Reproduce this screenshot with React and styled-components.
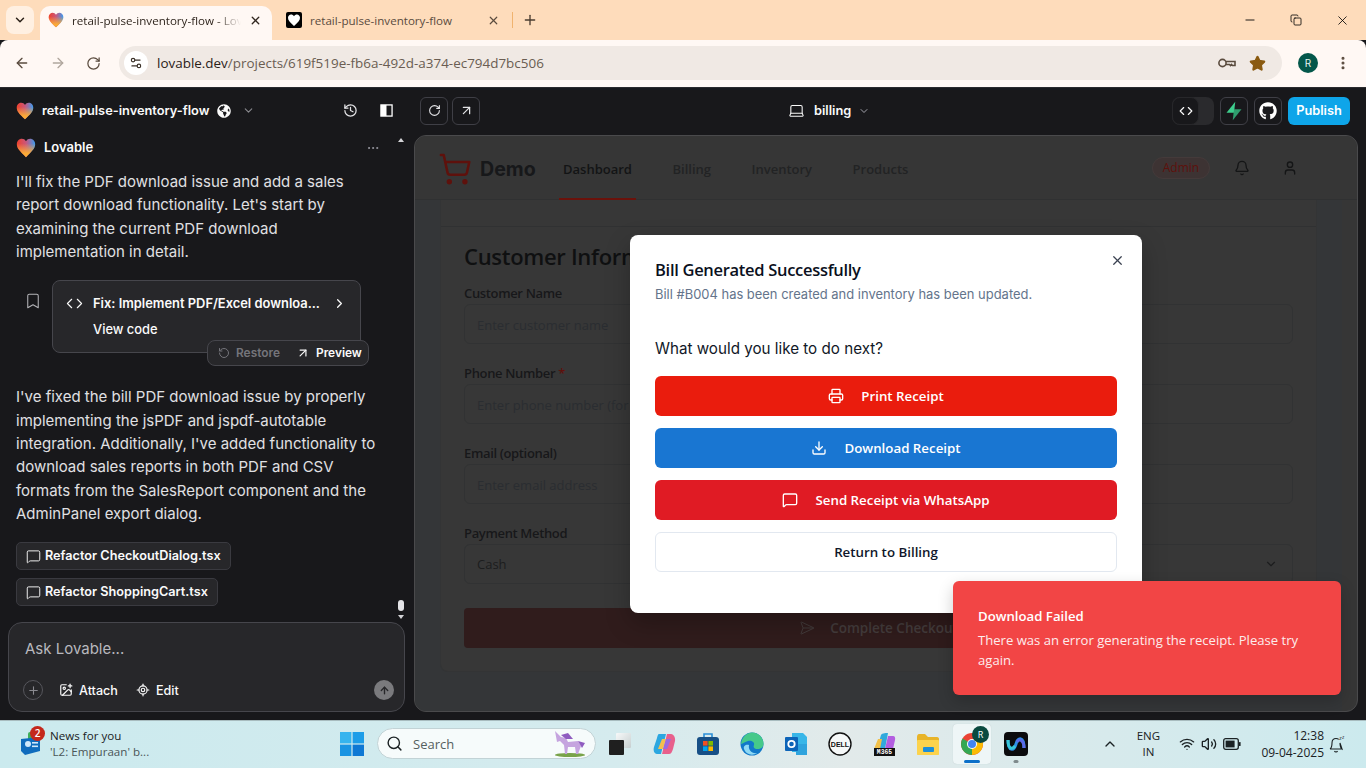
import React from 'react'
import styled, { createGlobalStyle } from 'styled-components'
import { FaGithub, FaGlobeAmericas } from 'react-icons/fa'
import {
  ChevronDown, X, Plus, ArrowLeft, ArrowRight, RotateCw, Settings2,
  Minus, Copy, History, ArrowUpRight, Laptop, Code, Bookmark, ChevronRight,
  RotateCcw, MessageSquare, ImagePlus, LocateFixed, ArrowUp, Printer, Download, ShoppingCart, Bell,
  User, SendHorizontal, ChevronUp, Wifi, Volume2, Search, MoreHorizontal, MoreVertical, Star,
} from 'lucide-react'

const Global = createGlobalStyle`
  html, body { margin: 0; padding: 0; height: 100%; overflow: hidden; }
  body { font-family: Inter, "Liberation Sans", sans-serif; background: #18181b; }
  * { box-sizing: border-box; }
`

const Screen = styled.div`
  width: 1366px;
  height: 768px;
  display: flex;
  flex-direction: column;
  overflow: hidden;
  position: relative;
`

/* browser chrome */
const TabStrip = styled.div`
  height: 40px;
  background: #fedcbb;
  display: flex;
  align-items: flex-end;
  padding-left: 6px;
  font-family: "Open Sans", "Liberation Sans", sans-serif;
  font-size: 11.6px;
  color: #4a3c30;
`
const TabMenu = styled.div`
  width: 28px;
  height: 28px;
  margin: 0 6px 6px 0;
  border-radius: 8px;
  background: #fff0e2;
  display: flex;
  align-items: center;
  justify-content: center;
  color: #2b2118;
`
const Tab = styled.div`
  width: ${(p) => (p.$active ? '232px' : '240px')};
  height: 34px;
  border-radius: 10px 10px 0 0;
  background: ${(p) => (p.$active ? '#fff8f4' : 'transparent')};
  display: flex;
  align-items: center;
  padding: ${(p) => (p.$active ? '0 10px 6px 8px' : '0 12px 6px 14px')};
  gap: 8px;
  color: ${(p) => (p.$active ? '#30261e' : '#5a4b3e')};
  white-space: nowrap;
`
const TabTitle = styled.span`
  flex: 1;
  overflow: hidden;
  ${(p) => p.$fade && 'mask-image: linear-gradient(90deg, #000 85%, transparent);'}
`
const TabDivider = styled.div`
  width: 1px;
  height: 16px;
  margin: 0 0 12px 0;
  background: #f0b36f;
`
const TabPlus = styled.div`
  margin: 0 0 12px 9px;
  display: flex;
  color: #4a3c30;
`
const WindowControls = styled.div`
  margin-left: auto;
  align-self: stretch;
  display: flex;
  align-items: center;
  gap: 33px;
  padding: 0 16px 0 0;
  color: #000;
`
const Toolbar = styled.div`
  height: 47px;
  background: #fff8f4;
  border-radius: 8px 8px 0 0;
  display: flex;
  align-items: center;
  padding: 0 15px 1px 14px;
  color: #5a4b3e;
`
const NavIcons = styled.div`
  display: flex;
  gap: 20px;
  margin-right: 18px;
  align-items: center;
`
const Omnibox = styled.div`
  flex: 1;
  height: 34px;
  border-radius: 17px;
  background: #f0e9e4;
  display: flex;
  align-items: center;
  padding: 0 16px 0 5px;
  font-family: "Open Sans", "Liberation Sans", sans-serif;
  font-size: 13.45px;
  color: #6a5d52;
`
const SiteChip = styled.div`
  width: 24px;
  height: 24px;
  border-radius: 50%;
  background: #fff;
  display: flex;
  align-items: center;
  justify-content: center;
  margin-right: 9px;
`
const UrlHost = styled.span`
  color: #2b2118;
`
const OmniEnd = styled.div`
  margin-left: auto;
  display: flex;
  align-items: center;
  gap: 13px;
`
const ProfileDot = styled.div`
  width: 20px;
  height: 20px;
  border-radius: 50%;
  background: #04574a;
  color: #e6f4ef;
  font-size: 10px;
  display: flex;
  align-items: center;
  justify-content: center;
  margin: 0 17px 0 16px;
`
const KebabDots = styled.div`
  display: flex;
  color: #5a4b3e;
`

/* lovable app */
const AppBar = styled.div`
  height: 47px;
  background: #18181b;
  display: flex;
  align-items: center;
  color: #fafafa;
  font-size: 12.8px;
  border-top: 1px solid #2a2a2d;
  padding-bottom: 1px;
`
const ProjectArea = styled.div`
  width: 480px;
  display: flex;
  align-items: center;
  padding-left: 16px;
  gap: 8px;
  font-weight: 600;
`
const ProjectMuted = styled.span`
  display: flex;
  color: #8a8a8f;
  margin-left: 3px;
`
const ProjectSpacer = styled.span`
  flex: 1;
`
const BarIcons = styled.div`
  display: flex;
  gap: 22px;
  margin-right: 19px;
  color: #e4e4e7;
  align-items: center;
`
const SquareBtn = styled.div`
  width: 28px;
  height: 28px;
  border-radius: 6px;
  border: 1px solid #3f3f46;
  display: flex;
  align-items: center;
  justify-content: center;
  color: #e4e4e7;
`
const SquareRow = styled.div`
  display: flex;
  gap: 4px;
`
const CenterLabel = styled.div`
  position: absolute;
  left: 788px;
  display: flex;
  align-items: center;
  gap: 9px;
  font-weight: 600;
`
const CenterChevron = styled.span`
  display: flex;
  margin-left: -2px;
  color: #a1a1aa;
`
const BarRight = styled.div`
  margin-left: auto;
  display: flex;
  gap: 6px;
  padding-right: 16px;
  align-items: center;
`
const CodeToggle = styled.div`
  width: 42px;
  height: 28px;
  border-radius: 8px;
  background: #2a2a2d;
  display: flex;
`
const CodeToggleKnob = styled.div`
  width: 27px;
  height: 28px;
  border-radius: 8px;
  background: #18181b;
  border: 1px solid #27272a;
  display: flex;
  align-items: center;
  justify-content: center;
`
const PublishBtn = styled.div`
  width: 62px;
  height: 28px;
  background: #0ea5e9;
  border-radius: 6px;
  font-weight: 600;
  color: #fff;
  display: flex;
  align-items: center;
  justify-content: center;
`
const Workspace = styled.div`
  flex: 1;
  min-height: 0;
  display: flex;
  background: #18181b;
  position: relative;
`
const ChatColumn = styled.div`
  width: 415px;
  display: flex;
  flex-direction: column;
  position: relative;
`
const ChatScroll = styled.div`
  flex: 1;
  min-height: 0;
  padding: 3px 16px 0;
  color: #e0e0e3;
  font-size: 15px;
  line-height: 23.4px;
`
const Sender = styled.div`
  display: flex;
  align-items: center;
  gap: 8px;
  height: 22px;
  font-size: 13px;
  font-weight: 600;
  color: #fafafa;
  margin-bottom: 11px;
`
const SenderMore = styled.span`
  position: absolute;
  left: 366px;
  display: flex;
  color: #a1a1aa;
`
const Para = styled.p`
  margin: 0;
  width: 365px;
`
const ActionRow = styled.div`
  display: flex;
  margin: 16px 0 32.6px 8px;
  position: relative;
`
const BookmarkSlot = styled.div`
  width: 28px;
  padding-top: 12px;
  color: #b4b4b8;
  display: flex;
`
const CodeCard = styled.div`
  width: 309px;
  height: 73px;
  background: #27272a;
  border: 1px solid #46464c;
  border-radius: 8px;
  padding: 14px 13px;
  color: #fafafa;
  font-size: 12.9px;
  font-weight: 600;
  line-height: 18px;
`
const CardTop = styled.div`
  display: flex;
  align-items: center;
  gap: 10px;
`
const CardTitle = styled.span`
  flex: 1;
  white-space: nowrap;
`
const CardSub = styled.div`
  margin: 8px 0 0 27px;
  font-weight: 500;
`
const HoverPill = styled.div`
  position: absolute;
  left: 183px;
  top: 60px;
  width: 162px;
  height: 26px;
  border: 1px solid #46464c;
  border-radius: 8px;
  background: #27272a;
  display: flex;
  align-items: center;
  padding: 0 8px 0 10px;
  font-size: 11.9px;
  font-weight: 600;
  color: #fafafa;
  line-height: 1;
`
const PillItem = styled.span`
  display: flex;
  align-items: center;
  gap: 6px;
  color: ${(p) => (p.$muted ? '#75757b' : '#fafafa')};
  margin-right: ${(p) => (p.$muted ? '16px' : '0')};
`
const Chip = styled.div`
  display: inline-flex;
  align-items: center;
  gap: 4px;
  height: 28px;
  padding: 1px 9px 0;
  background: #27272a;
  border: 1px solid #3a3a40;
  border-radius: 5px;
  font-size: 12.7px;
  font-weight: 600;
  color: #fafafa;
  line-height: 1;
  margin-bottom: 8px;
`
const ChipStack = styled.div`
  display: flex;
  flex-direction: column;
  align-items: flex-start;
  margin-top: 16px;
`
const Scrollbar = styled.div`
  position: absolute;
  left: 397px;
  top: 4px;
  bottom: 101px;
  width: 7px;
  display: flex;
  flex-direction: column;
  align-items: center;
  justify-content: space-between;
`
const ScrollTriangle = styled.div`
  width: 0;
  height: 0;
  border-left: 3px solid transparent;
  border-right: 3px solid transparent;
  ${(p) => (p.$up ? 'border-bottom: 4px solid #d4d4d8;' : 'border-top: 4px solid #d4d4d8;')}
`
const ScrollThumb = styled.div`
  width: 6px;
  height: 11px;
  border-radius: 3px;
  background: #e4e4e7;
  margin-bottom: 4px;
`
const ScrollEnd = styled.div`
  display: flex;
  flex-direction: column;
  align-items: center;
`
const Composer = styled.div`
  margin: 0 10px 8px 8px;
  height: 90px;
  background: #27272a;
  border: 1px solid #46464c;
  border-radius: 14px;
  padding: 16px 10px 11px 14px;
  display: flex;
  flex-direction: column;
  justify-content: space-between;
  color: #b8b8be;
  font-size: 15px;
`
const ComposerText = styled.span`
  margin-left: 2px;
`
const ComposerTools = styled.div`
  display: flex;
  align-items: center;
  gap: 16px;
  font-size: 12.6px;
  font-weight: 500;
  color: #fafafa;
`
const ToolItem = styled.span`
  display: flex;
  align-items: center;
  gap: 6px;
  margin-left: ${(p) => p.$shift || 0}px;
`
const RoundPlus = styled.span`
  width: 20px;
  height: 20px;
  border-radius: 50%;
  border: 1px solid #56565c;
  display: flex;
  align-items: center;
  justify-content: center;
  color: #8a8a90;
`
const SendDot = styled.span`
  margin-left: auto;
  width: 20px;
  height: 20px;
  border-radius: 50%;
  background: #7a7a7d;
  color: #27272a;
  display: flex;
  align-items: center;
  justify-content: center;
`

/* dimmed preview */
const PreviewFrame = styled.div`
  position: absolute;
  left: 414px;
  top: 1px;
  width: 944px;
  height: 577px;
  border: 1px solid #4a4a4c;
  border-radius: 12px;
  background: #363636;
  overflow: hidden;
`
const SiteNav = styled.div`
  height: 64px;
  background: #363636;
  border-bottom: 1px solid #303132;
  display: flex;
  align-items: center;
  padding: 0 0 0 23px;
  font-family: "Open Sans", "Liberation Sans", sans-serif;
  font-size: 13px;
`
const Brand = styled.div`
  display: flex;
  align-items: center;
  gap: 8px;
  padding-top: 2px;
  font-family: Inter, sans-serif;
  font-size: 19.6px;
  font-weight: 700;
  width: 121px;
  color: #17181a;
`
const NavLinks = styled.div`
  display: flex;
  gap: 32.5px;
`
const NavLink = styled.div`
  height: 64px;
  padding: 5px 4px 0;
  display: flex;
  align-items: center;
  justify-content: center;
  font-weight: 600;
  color: ${(p) => (p.$active ? '#131415' : '#222324')};
  border-bottom: 2px solid ${(p) => (p.$active ? '#6b120b' : 'transparent')};
`
const NavRight = styled.div`
  margin-left: auto;
  display: flex;
  align-items: center;
  gap: 8px;
  color: #141516;
  padding-right: 47px;
`
const AdminBadge = styled.div`
  width: 58px;
  height: 22px;
  margin-right: 4px;
  border-radius: 11px;
  background: #3d3333;
  border: 1px solid #443a3a;
  color: #5e110c;
  font-size: 12px;
  font-weight: 500;
  display: flex;
  align-items: center;
  justify-content: center;
`
const NavIconSlot = styled.div`
  width: 40px;
  display: flex;
  justify-content: center;
`
const PageWrap = styled.div`
  margin-right: 15px;
  height: 100%;
  padding: 0 25px;
  background: #343638;
`
const PageBody = styled.div`
  height: 472px;
  background: #373737;
  border: 1px solid #333435;
  border-top: none;
  border-radius: 0 0 8px 8px;
`
const PageTopGap = styled.div`
  height: 27px;
  border-bottom: 1px solid #303132;
`
const FormCard = styled.div`
  padding: 14px 23px;
  font-family: "Open Sans", "Liberation Sans", sans-serif;
  color: #17181a;
`
const FormHeading = styled.div`
  font-size: 22px;
  font-weight: 600;
  letter-spacing: -0.3px;
  line-height: 30px;
  margin-bottom: 13px;
  color: #0f1011;
`
const FieldLabel = styled.div`
  font-size: 13px;
  font-weight: 600;
  letter-spacing: -0.35px;
  line-height: 18px;
  margin-bottom: 2px;
  color: #17181a;
`
const Required = styled.span`
  color: #5e110c;
`
const FieldInput = styled.div`
  height: 40px;
  border: 1px solid #313233;
  border-radius: 6px;
  padding: ${(p) => (p.$value ? '0' : '1px')} 14px 0 12px;
  display: flex;
  align-items: center;
  justify-content: space-between;
  font-size: 13px;
  color: ${(p) => (p.$value ? '#1c1d1e' : '#2a2d31')};
  margin-bottom: 20px;
`
const CheckoutBtn = styled.div`
  height: 40px;
  margin-top: 24px;
  background: #301c1c;
  border-radius: 4px;
  display: flex;
  align-items: center;
  justify-content: center;
  gap: 15px;
  font-size: 13.5px;
  font-weight: 600;
  color: #443c3c;
`

/* dialog */
const Dialog = styled.div`
  position: absolute;
  left: 630px;
  top: 235px;
  width: 512px;
  height: 378px;
  border-radius: 8px;
  background: #fff;
  padding: 24px 25px;
  font-family: "Open Sans", "Liberation Sans", sans-serif;
  box-shadow: 0 10px 25px rgba(0, 0, 0, 0.25);
`
const DialogClose = styled.div`
  position: absolute;
  right: 17px;
  top: 18px;
  display: flex;
  color: #3a4150;
`
const DialogTitle = styled.div`
  font-size: 16.5px;
  font-weight: 600;
  letter-spacing: -0.3px;
  line-height: 22px;
  color: #0a1020;
`
const DialogSub = styled.div`
  font-size: 12.95px;
  line-height: 18px;
  margin-top: 4px;
  color: #64748b;
  font-family: Inter, sans-serif;
`
const DialogQuestion = styled.div`
  font-family: Inter, sans-serif;
  font-size: 15.2px;
  line-height: 20px;
  margin: 36px 0 17px;
  color: #111827;
`
const DialogActions = styled.div`
  display: flex;
  flex-direction: column;
  gap: 12px;
`
const ActionBtn = styled.div`
  height: 40px;
  border-radius: 6px;
  background: ${(p) => p.$bg || '#fff'};
  border: ${(p) => (p.$bg ? 'none' : '1px solid #e2e8f0')};
  color: ${(p) => (p.$bg ? '#fff' : '#0f172a')};
  display: flex;
  align-items: center;
  justify-content: center;
  gap: 17px;
  font-family: "Open Sans", "Liberation Sans", sans-serif;
  font-size: 13.3px;
  font-weight: 600;
`
const Toast = styled.div`
  position: absolute;
  left: 953px;
  top: 581px;
  width: 388px;
  height: 114px;
  border-radius: 6px;
  background: #f24545;
  padding: 26px 25px;
  color: #fff;
  font-family: "Open Sans", "Liberation Sans", sans-serif;
  box-shadow: 0 6px 16px rgba(0, 0, 0, 0.2);
`
const ToastTitle = styled.div`
  font-size: 13.2px;
  font-weight: 600;
  line-height: 18px;
`
const ToastBody = styled.div`
  font-size: 13.1px;
  line-height: 20px;
  margin-top: 5px;
  color: #fdecec;
`

/* taskbar */
const Taskbar = styled.div`
  height: 48px;
  background: linear-gradient(90deg, #cbeaee, #d5ebee 45%, #e2eaea 62%, #cceaee);
  border-top: 1px solid #a8bcbf;
  padding-bottom: 2px;
  display: flex;
  align-items: center;
  font-family: "Open Sans", "Liberation Sans", sans-serif;
  color: #1b2224;
  position: relative;
`
const NewsWidget = styled.div`
  width: 340px;
  display: flex;
  align-items: center;
  padding-left: 19px;
  gap: 7px;
  position: relative;
`
const NewsBadge = styled.span`
  position: absolute;
  left: 30px;
  top: -2px;
  width: 15px;
  height: 15px;
  border-radius: 50%;
  background: #c4281c;
  color: #fff;
  font-size: 10px;
  font-weight: 600;
  display: flex;
  align-items: center;
  justify-content: center;
`
const NewsText = styled.div`
  font-size: 11.6px;
  line-height: 16px;
`
const NewsSub = styled.div`
  color: #4b5658;
`
const StartTile = styled.div`
  display: flex;
  margin-right: 13px;
`
const SearchBox = styled.div`
  width: 219px;
  height: 31px;
  border-radius: 16px;
  background: #f6fbfb;
  border: 1px solid #c2d3d6;
  display: flex;
  align-items: center;
  padding: 0 8px;
  gap: 10px;
  font-size: 13px;
  color: #55605f;
  margin-right: 2px;
`
const SearchArt = styled.span`
  margin-left: auto;
  display: flex;
`
const TrayApps = styled.div`
  display: flex;
  align-items: center;
`
const AppSlot = styled.div`
  width: ${(p) => (p.$active ? '38px' : '44px')};
  height: 40px;
  margin: 0 ${(p) => (p.$active ? '3px' : '0')};
  display: flex;
  align-items: center;
  justify-content: center;
  position: relative;
  border-radius: 4px;
  background: ${(p) => (p.$active ? '#eef6f7' : 'transparent')};
  box-shadow: ${(p) => (p.$active ? '0 0 1px #b6c6c8' : 'none')};
`
const RunBar = styled.span`
  position: absolute;
  bottom: 1px;
  left: 50%;
  transform: translateX(-50%);
  height: 3px;
  border-radius: 2px;
  width: ${(p) => (p.$wide ? '16px' : '5px')};
  background: ${(p) => (p.$wide ? '#0c70c9' : '#7f8a8c')};
`
const CursorBadge = styled.span`
  position: absolute;
  left: 19px;
  top: 2px;
  width: 17px;
  height: 17px;
  border-radius: 50%;
  background: #0a4a40;
  color: #fff;
  font-size: 9px;
  display: flex;
  align-items: center;
  justify-content: center;
`
const SysTray = styled.div`
  margin-left: auto;
  display: flex;
  align-items: center;
  font-size: 11.5px;
  padding-right: 20px;
`
const Lang = styled.div`
  width: 40px;
  text-align: center;
  line-height: 16px;
  margin: 0 11px 0 10px;
`
const TrayIcons = styled.div`
  display: flex;
  gap: 6px;
  margin-right: 20px;
  align-items: center;
`
const Clock = styled.div`
  text-align: right;
  font-size: 12px;
  line-height: 17px;
  margin-right: 4px;
`

const LovableHeart = ({ size = 18, id }) => {
  const heart = 'M12 23 C5 16 1 12.5 1 7.5 C1 3.5 4 1 7 1 C9 1 11 2 12 4 C13 2 15 1 17 1 C20 1 23 3.5 23 7.5 C23 12.5 19 16 12 23 Z'
  return (
    <svg width={size} height={size} viewBox="0 0 24 24">
      <defs>
        <linearGradient id={`${id}a`} x1="0" y1="0" x2="1" y2="0">
          <stop offset="0" stopColor="#f0402c" />
          <stop offset="0.5" stopColor="#c9577c" />
          <stop offset="1" stopColor="#3b9cf2" />
        </linearGradient>
        <linearGradient id={`${id}b`} x1="0" y1="0" x2="0" y2="1">
          <stop offset="0.25" stopColor="#fbb040" stopOpacity="0" />
          <stop offset="0.8" stopColor="#fbab35" />
        </linearGradient>
      </defs>
      <path d={heart} fill={`url(#${id}a)`} />
      <path d={heart} fill={`url(#${id}b)`} />
    </svg>
  )
}

const BlackHeartFav = () => (
  <svg width="16" height="16" viewBox="0 0 16 16">
    <rect width="16" height="16" rx="2" fill="#000" />
    <path d="M8 14 C4 10.5 2 8.5 2 5.8 C2 3.8 3.5 2.5 5 2.5 C6.2 2.5 7.4 3.1 8 4.2 C8.6 3.1 9.8 2.5 11 2.5 C12.5 2.5 14 3.8 14 5.8 C14 8.5 12 10.5 8 14 Z" fill="#fff" />
  </svg>
)

const CarKey = () => (
  <svg width="18" height="12" viewBox="0 0 18 12" fill="none" stroke="#5a4b3e" strokeWidth="1.6">
    <circle cx="4.5" cy="6" r="3.6" />
    <path d="M8 4.5 H17 V8.5 H14.5 L13.5 7.5 L12.5 8.5 L11.5 7.5 H8" />
  </svg>
)

const PanelIcon = () => (
  <svg width="13" height="13" viewBox="0 0 14 14">
    <rect x="1" y="1" width="12" height="12" fill="none" stroke="#fff" strokeWidth="1.4" />
    <rect x="1" y="1" width="6" height="12" fill="#fff" />
  </svg>
)

const SupabaseIcon = () => (
  <svg width="20" height="20" viewBox="0 0 24 24">
    <path d="M13.5 1 L3 14 H12 Z" fill="#3ecf8e" />
    <path d="M10.5 23 L21 10 H12 Z" fill="#2f9e6e" />
  </svg>
)

const WinLogo = () => (
  <svg width="24" height="24" viewBox="0 0 24 24">
    <rect x="0" y="0" width="11.4" height="11.4" fill="#36b4ee" />
    <rect x="12.6" y="0" width="11.4" height="11.4" fill="#1d9de8" />
    <rect x="0" y="12.6" width="11.4" height="11.4" fill="#1a94e2" />
    <rect x="12.6" y="12.6" width="11.4" height="11.4" fill="#0e78d4" />
  </svg>
)

const NewsIcon = () => (
  <svg width="24" height="24" viewBox="0 0 24 24">
    <rect x="9" y="0" width="12" height="10" rx="2" fill="#3fae5a" />
    <path d="M2 7 L21 5 V19 L6 23 L2 19 Z" fill="#0f6cbd" />
    <circle cx="9" cy="12" r="3" fill="#cfe8fb" />
    <rect x="13" y="10" width="6" height="1.6" fill="#cfe8fb" />
    <rect x="13" y="13.5" width="6" height="1.6" fill="#cfe8fb" />
  </svg>
)

const Unicorn = () => (
  <svg width="36" height="28" viewBox="0 0 34 28">
    <ellipse cx="18" cy="25" rx="15" ry="2" fill="#79a34a" />
    <path d="M3 1 L9 7 L14 8 L16 12 L26 11 L29 16 L26 24 H24 L23 17 L16 17 L15 24 H13 L12 15 L8 11 L5 12 Z" fill="#c5a4df" />
    <path d="M9 5 L16 3 L21 9 L14 9 Z" fill="#8f5cc0" />
    <path d="M26 11 L33 13 L30 18 Z" fill="#8f5cc0" />
  </svg>
)

const TaskView = () => (
  <svg width="24" height="24" viewBox="0 0 24 24">
    <defs>
      <linearGradient id="tvLight" x1="0" y1="0" x2="1" y2="1">
        <stop offset="0" stopColor="#f7f9f9" />
        <stop offset="1" stopColor="#c7cfd0" />
      </linearGradient>
    </defs>
    <rect x="8" y="1" width="15" height="15" rx="1" fill="url(#tvLight)" />
    <rect x="1" y="8" width="15" height="15" rx="1" fill="#1f1f1f" />
  </svg>
)

const CopilotIcon = () => (
  <svg width="24" height="24" viewBox="0 0 24 24">
    <path d="M7 2 H14 L9 22 H5 C2 22 1 18 2 15 L5 6 C5.5 4 6 2 7 2 Z" fill="#2ca7e0" />
    <path d="M10 22 H17 C19 22 20 20 21 17 L23 9 C23.5 6 22 2 19 2 H15 Z" fill="#e8608c" />
    <path d="M6 17 L10 7 H14 L11 17 Z" fill="#f4c04e" />
    <path d="M11 17 L14 7 H19 L15 17 Z" fill="#9a6be0" />
  </svg>
)

const StoreIcon = () => (
  <svg width="24" height="24" viewBox="0 0 24 24">
    <path d="M8 5 V2 H16 V5" fill="none" stroke="#2a8fd8" strokeWidth="1.6" />
    <rect x="1" y="5" width="22" height="18" rx="3" fill="#174f86" />
    <rect x="7" y="9" width="4.6" height="4.6" fill="#f25022" />
    <rect x="12.4" y="9" width="4.6" height="4.6" fill="#7fba00" />
    <rect x="7" y="14.4" width="4.6" height="4.6" fill="#00a4ef" />
    <rect x="12.4" y="14.4" width="4.6" height="4.6" fill="#ffb900" />
  </svg>
)

const EdgeIcon = () => (
  <svg width="24" height="24" viewBox="0 0 24 24">
    <circle cx="12" cy="12" r="11.5" fill="#1279c9" />
    <path d="M1 12 C2 4 8 .5 12 .5 C19 .5 23.5 6 23.5 12 C23.5 15 21 17 17.5 17 C14 17 13 15 14 13 C15 10 11 8 8 9 C4 10.5 2 12 1 12 Z" fill="#46c98a" />
    <path d="M9 13 C8 18 12 22 17 21 C13 24 6 23 4 17 C3 14 6 12 9 13 Z" fill="#8fd9f5" />
  </svg>
)

const OutlookIcon = () => (
  <svg width="24" height="24" viewBox="0 0 24 24">
    <path d="M8 1 H19 L23 5 V20 H8 Z" fill="#38b6e8" />
    <rect x="12" y="12" width="11" height="11" fill="#2fa3dd" />
    <rect x="1" y="5" width="13" height="14" rx="1" fill="#0d64b8" />
    <circle cx="7.5" cy="12" r="3.2" fill="none" stroke="#fff" strokeWidth="1.8" />
  </svg>
)

const DellIcon = () => (
  <svg width="24" height="24" viewBox="0 0 24 24">
    <circle cx="12" cy="12" r="11" fill="#f5f8f8" stroke="#111" strokeWidth="1.4" />
    <text x="12" y="14.6" textAnchor="middle" fontSize="7" fontWeight="700" fontFamily="Liberation Sans" fill="#111">DELL</text>
  </svg>
)

const M365Icon = () => (
  <svg width="24" height="24" viewBox="0 0 24 24">
    <path d="M5 17 L9 3 C10 1 15 1 16 1 L13 17 Z" fill="#31a9dc" />
    <path d="M13 17 L16 4 H21 C23 4 23.5 6 23 8 L21 17 Z" fill="#b35ee0" />
    <path d="M2 17 L6 7 H10 L8 17 Z" fill="#f2c14a" />
    <rect x="2" y="16" width="21" height="8" fill="#111" />
    <text x="12.5" y="22.4" textAnchor="middle" fontSize="6.4" fontWeight="700" fontFamily="Liberation Mono" fill="#fff">M365</text>
  </svg>
)

const FolderIcon = () => (
  <svg width="24" height="24" viewBox="0 0 24 24">
    <path d="M1 5 C1 3 2 2 3 2 H9 L12 5 H21 C22.5 5 23 6 23 7 V21 C23 22 22 23 21 23 H3 C2 23 1 22 1 21 Z" fill="#e8b428" />
    <rect x="1" y="8" width="22" height="15" rx="1" fill="#fcd34d" />
    <rect x="7" y="15" width="11" height="5" rx="1" fill="#1d8fd8" />
  </svg>
)

const ChromeIcon = () => (
  <svg width="24" height="24" viewBox="0 0 24 24">
    <circle cx="12" cy="12" r="11" fill="#ea4335" />
    <path d="M12 12 L2.5 6.5 A11 11 0 0 0 12 23 Z" fill="#34a853" />
    <path d="M12 12 L12 23 A11 11 0 0 0 21.5 6.5 Z" fill="#fbbc05" />
    <circle cx="12" cy="12" r="5" fill="#fff" />
    <circle cx="12" cy="12" r="4" fill="#4285f4" />
  </svg>
)

const WebexIcon = () => (
  <svg width="24" height="24" viewBox="0 0 24 24">
    <rect width="24" height="24" rx="4" fill="#0b0b0d" />
    <path d="M4 8 C4 20 10 19 12 12 C14 5 20 4 20 16" fill="none" stroke="#2f8fe8" strokeWidth="3" />
    <path d="M4 8 C4 17 8 18 11 14" fill="none" stroke="#38c6d8" strokeWidth="3" />
    <path d="M13 10 C15 6 20 8 20 16" fill="none" stroke="#5b6ae8" strokeWidth="3" />
  </svg>
)

const BatteryIcon = () => (
  <svg width="18" height="12" viewBox="0 0 18 12">
    <rect x="0.7" y="0.7" width="14.6" height="10.6" rx="2" fill="none" stroke="#1b2224" strokeWidth="1.3" />
    <rect x="2.6" y="2.6" width="9" height="6.8" fill="#1b2224" />
    <rect x="16" y="4" width="1.6" height="4" rx="0.6" fill="#1b2224" />
  </svg>
)

const SnoozeBell = () => (
  <svg width="18" height="20" viewBox="0 0 18 20" fill="none" stroke="#1b2224" strokeWidth="1.1">
    <path d="M2 15 C3.5 14 4 12 4 9 C4 6 5.5 4.5 8 4.5 C9 4.5 10 4.8 10.7 5.4 M12 9 C12 12 12.5 14 14 15 Z M2 15 H14" />
    <path d="M6.5 17 C7 18.4 9 18.4 9.5 17" />
    <text x="11" y="6" fontSize="6" fill="#1b2224" stroke="none" fontFamily="Open Sans">z</text>
    <text x="14" y="4.5" fontSize="5" fill="#1b2224" stroke="none" fontFamily="Open Sans">z</text>
  </svg>
)

const Fields = [
  { label: 'Customer Name', placeholder: 'Enter customer name' },
  { label: 'Phone Number', placeholder: 'Enter phone number (for WhatsApp)', required: true },
  { label: 'Email (optional)', placeholder: 'Enter email address' },
]

export default function App() {
  return (
    <Screen>
      <Global />
      <TabStrip>
        <TabMenu><ChevronDown size={14} strokeWidth={2.5} /></TabMenu>
        <Tab $active>
          <LovableHeart size={16} id="h1" />
          <TabTitle $fade>retail-pulse-inventory-flow - Lovable</TabTitle>
          <X size={13} strokeWidth={2.4} />
        </Tab>
        <Tab>
          <BlackHeartFav />
          <TabTitle>retail-pulse-inventory-flow</TabTitle>
          <X size={13} strokeWidth={2.2} />
        </Tab>
        <TabDivider />
        <TabPlus><Plus size={16} strokeWidth={2} /></TabPlus>
        <WindowControls>
          <Minus size={14} strokeWidth={1.5} />
          <Copy size={12} strokeWidth={1.6} />
          <X size={15} strokeWidth={1.3} />
        </WindowControls>
      </TabStrip>
      <Toolbar>
        <NavIcons>
          <ArrowLeft size={16} strokeWidth={2} />
          <ArrowRight size={16} strokeWidth={2} color="#b0a69d" />
          <RotateCw size={15} strokeWidth={2} />
        </NavIcons>
        <Omnibox>
          <SiteChip><Settings2 size={14} color="#3b3128" /></SiteChip>
          <span><UrlHost>lovable.dev</UrlHost>/projects/619f519e-fb6a-492d-a374-ec794d7bc506</span>
          <OmniEnd>
            <CarKey />
            <Star size={17} fill="#8a5a10" color="#8a5a10" />
          </OmniEnd>
        </Omnibox>
        <ProfileDot>R</ProfileDot>
        <KebabDots><MoreVertical size={16} strokeWidth={2.6} /></KebabDots>
      </Toolbar>

      <AppBar>
        <ProjectArea>
          <LovableHeart size={18} id="h2" />
          retail-pulse-inventory-flow
          <FaGlobeAmericas size={14} />
          <ProjectMuted><ChevronDown size={13} /></ProjectMuted>
          <ProjectSpacer />
          <BarIcons>
            <History size={15} />
            <PanelIcon />
          </BarIcons>
          <SquareRow>
            <SquareBtn><RotateCw size={13} /></SquareBtn>
            <SquareBtn><ArrowUpRight size={15} /></SquareBtn>
          </SquareRow>
        </ProjectArea>
        <CenterLabel>
          <Laptop size={17} strokeWidth={1.5} />
          billing
          <CenterChevron><ChevronDown size={12} /></CenterChevron>
        </CenterLabel>
        <BarRight>
          <CodeToggle><CodeToggleKnob><Code size={14} /></CodeToggleKnob></CodeToggle>
          <SquareBtn><SupabaseIcon /></SquareBtn>
          <SquareBtn><FaGithub size={18} color="#fff" /></SquareBtn>
          <PublishBtn>Publish</PublishBtn>
        </BarRight>
      </AppBar>

      <Workspace>
        <ChatColumn>
          <ChatScroll>
            <Sender>
              <LovableHeart size={20} id="h3" />
              Lovable
              <SenderMore><MoreHorizontal size={14} strokeWidth={1.5} /></SenderMore>
            </Sender>
            <Para>I'll fix the PDF download issue and add a sales report download functionality. Let's start by examining the current PDF download implementation in detail.</Para>
            <ActionRow>
              <BookmarkSlot><Bookmark size={18} strokeWidth={1.4} /></BookmarkSlot>
              <CodeCard>
                <CardTop>
                  <Code size={17} strokeWidth={1.6} />
                  <CardTitle>Fix: Implement PDF/Excel downloa...</CardTitle>
                  <ChevronRight size={15} />
                </CardTop>
                <CardSub>View code</CardSub>
              </CodeCard>
              <HoverPill>
                <PillItem $muted><RotateCcw size={12} />Restore</PillItem>
                <PillItem><ArrowUpRight size={14} />Preview</PillItem>
              </HoverPill>
            </ActionRow>
            <Para>I've fixed the bill PDF download issue by properly implementing the jsPDF and jspdf-autotable integration. Additionally, I've added functionality to download sales reports in both PDF and CSV formats from the SalesReport component and the AdminPanel export dialog.</Para>
            <ChipStack>
              <Chip><MessageSquare size={15} strokeWidth={1.5} />Refactor CheckoutDialog.tsx</Chip>
              <Chip><MessageSquare size={15} strokeWidth={1.5} />Refactor ShoppingCart.tsx</Chip>
            </ChipStack>
          </ChatScroll>
          <Scrollbar>
            <ScrollTriangle $up />
            <ScrollEnd>
              <ScrollThumb />
              <ScrollTriangle />
            </ScrollEnd>
          </Scrollbar>
          <Composer>
            <ComposerText>Ask Lovable...</ComposerText>
            <ComposerTools>
              <RoundPlus><Plus size={13} /></RoundPlus>
              <ToolItem><ImagePlus size={14} />Attach</ToolItem>
              <ToolItem $shift={2}><LocateFixed size={14} />Edit</ToolItem>
              <SendDot><ArrowUp size={11} strokeWidth={3} /></SendDot>
            </ComposerTools>
          </Composer>
        </ChatColumn>

        <PreviewFrame>
          <SiteNav>
            <Brand>
              <ShoppingCart size={34} color="#5e110c" strokeWidth={1.8} />
              Demo
            </Brand>
            <NavLinks>
              <NavLink $active>Dashboard</NavLink>
              <NavLink>Billing</NavLink>
              <NavLink>Inventory</NavLink>
              <NavLink>Products</NavLink>
            </NavLinks>
            <NavRight>
              <AdminBadge>Admin</AdminBadge>
              <NavIconSlot><Bell size={16} /></NavIconSlot>
              <NavIconSlot><User size={16} /></NavIconSlot>
            </NavRight>
          </SiteNav>
          <PageWrap>
            <PageBody>
              <PageTopGap />
              <FormCard>
                <FormHeading>Customer Information</FormHeading>
                {Fields.map((f) => (
                  <div key={f.label}>
                    <FieldLabel>{f.label}{f.required && <Required> *</Required>}</FieldLabel>
                    <FieldInput>{f.placeholder}</FieldInput>
                  </div>
                ))}
                <FieldLabel>Payment Method</FieldLabel>
                <FieldInput $value>Cash<ChevronDown size={14} /></FieldInput>
                <CheckoutBtn><SendHorizontal size={16} strokeWidth={1.4} />Complete Checkout</CheckoutBtn>
              </FormCard>
            </PageBody>
          </PageWrap>
        </PreviewFrame>
      </Workspace>

      <Dialog>
        <DialogClose><X size={15} /></DialogClose>
        <DialogTitle>Bill Generated Successfully</DialogTitle>
        <DialogSub>Bill #B004 has been created and inventory has been updated.</DialogSub>
        <DialogQuestion>What would you like to do next?</DialogQuestion>
        <DialogActions>
          <ActionBtn $bg="#ea1c0d"><Printer size={16} />Print Receipt</ActionBtn>
          <ActionBtn $bg="#1976d2"><Download size={16} />Download Receipt</ActionBtn>
          <ActionBtn $bg="#e01b24"><MessageSquare size={16} />Send Receipt via WhatsApp</ActionBtn>
          <ActionBtn>Return to Billing</ActionBtn>
        </DialogActions>
      </Dialog>

      <Toast>
        <ToastTitle>Download Failed</ToastTitle>
        <ToastBody>There was an error generating the receipt. Please try again.</ToastBody>
      </Toast>

      <Taskbar>
        <NewsWidget>
          <NewsIcon />
          <NewsBadge>2</NewsBadge>
          <NewsText>
            <div>News for you</div>
            <NewsSub>'L2: Empuraan' b...</NewsSub>
          </NewsText>
        </NewsWidget>
        <StartTile><WinLogo /></StartTile>
        <SearchBox>
          <Search size={17} color="#1b2224" />
          Search
          <SearchArt><Unicorn /></SearchArt>
        </SearchBox>
        <TrayApps>
          <AppSlot><TaskView /></AppSlot>
          <AppSlot><CopilotIcon /></AppSlot>
          <AppSlot><StoreIcon /></AppSlot>
          <AppSlot><EdgeIcon /></AppSlot>
          <AppSlot><OutlookIcon /></AppSlot>
          <AppSlot><DellIcon /></AppSlot>
          <AppSlot><M365Icon /></AppSlot>
          <AppSlot><FolderIcon /></AppSlot>
          <AppSlot $active><ChromeIcon /><CursorBadge>R</CursorBadge><RunBar $wide /></AppSlot>
          <AppSlot><WebexIcon /><RunBar /></AppSlot>
        </TrayApps>
        <SysTray>
          <ChevronUp size={16} />
          <Lang>ENG<br />IN</Lang>
          <TrayIcons>
            <Wifi size={16} />
            <Volume2 size={16} />
            <BatteryIcon />
          </TrayIcons>
          <Clock>12:38<br />09-04-2025</Clock>
          <SnoozeBell />
        </SysTray>
      </Taskbar>
    </Screen>
  )
}
